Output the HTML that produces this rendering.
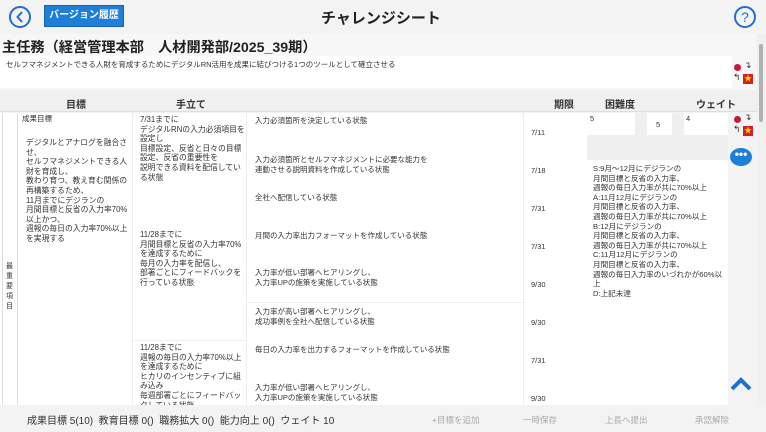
<!DOCTYPE html>
<html><head><meta charset="utf-8"><style>
*{margin:0;padding:0;box-sizing:border-box}
body{width:766px;height:432px;overflow:hidden;background:#f3f3f3;font-family:"Liberation Sans","Noto Sans CJK JP",sans-serif;color:#333;position:relative}
.a{position:absolute}
.t{font-size:7.5px;line-height:9.6px;white-space:nowrap}
.w{background:#fff}
</style></head><body>
<div class="a" style="left:9px;top:6px;width:22px;height:22px;border:2px solid #1f6fd0;border-radius:50%;"></div>
<svg class="a" style="left:9px;top:6px" width="22" height="22"><path d="M13 6 L8.5 11 L13 16" stroke="#1f6fd0" stroke-width="2" fill="none"/></svg>
<div class="a" style="left:44px;top:5px;width:80px;height:22px;background:#1f7fd8;border:1px solid #1565b0;color:#fff;font-size:10px;font-weight:bold;line-height:20px;text-align:center">バージョン履歴</div>
<div class="a" style="left:321px;top:7px;font-size:15px;font-weight:bold;color:#222">チャレンジシート</div>
<div class="a" style="left:734px;top:6px;width:22px;height:22px;border:2px solid #1f6fd0;border-radius:50%;color:#1f6fd0;font-size:14px;line-height:18px;text-align:center">?</div>
<div class="a" style="left:0;top:34px;width:757px;height:56px;background:#f7f7f7"></div>
<div class="a" style="left:2px;top:37px;font-size:14.2px;font-weight:bold;color:#222">主任務（経営管理本部　人材開発部/2025_39期）</div>
<div class="a w" style="left:0;top:56px;width:732px;height:32px"></div>
<div class="a" style="left:6px;top:59px;font-size:7.5px;white-space:nowrap">セルフマネジメントできる人財を育成するためにデジタルRN活用を成果に結びつける1つのツールとして確立させる</div>
<div class="a" style="left:734px;top:64px;width:7px;height:7px;border-radius:50%;background:#c8193c"></div>
<div class="a" style="left:744px;top:60px;font-size:9px">↴</div>
<div class="a" style="left:733px;top:72px;font-size:9px">↰</div>
<div class="a" style="left:743px;top:74px;width:10px;height:10px;background:#d42020;color:#ffd800;font-size:8px;line-height:10px;text-align:center">★</div>
<div class="a" style="left:0;top:90px;width:757px;height:22px;background:#f0f0f0;border-bottom:1px solid #ddd"></div>
<div class="a" style="left:66px;top:96px;font-size:10px;font-weight:bold">目標</div>
<div class="a" style="left:176px;top:96px;font-size:10px;font-weight:bold">手立て</div>
<div class="a" style="left:554px;top:96px;font-size:10px;font-weight:bold">期限</div>
<div class="a" style="left:605px;top:96px;font-size:10px;font-weight:bold">困難度</div>
<div class="a" style="left:696px;top:96px;font-size:10px;font-weight:bold">ウェイト</div>
<div class="a w" style="left:0;top:113px;width:728px;height:292px"></div>
<div class="a" style="left:2px;top:113px;width:16px;height:292px;border-left:1px solid #ddd;border-right:1px solid #ddd"></div>
<div class="a t" style="left:6px;top:262px;width:8px;white-space:normal;line-height:10px;font-size:7px">最重要項目</div>
<div class="a t" style="left:22px;top:114px">成果目標</div>
<div class="a t" style="left:26px;top:138px;font-size:7.8px;line-height:9.6px">デジタルとアナログを融合さ<br>せ、<br>セルフマネジメントできる人<br>財を育成し、<br>教わり育つ、教え育む関係の<br>再構築するため、<br>11月までにデジランの<br>月間目標と反省の入力率70%<br>以上かつ、<br>週報の毎日の入力率70%以上<br>を実現する</div>
<div class="a" style="left:132px;top:113px;width:1px;height:292px;background:#eee"></div>
<div class="a" style="left:246px;top:113px;width:1px;height:292px;background:#eee"></div>
<div class="a" style="left:523px;top:113px;width:1px;height:292px;background:#eee"></div>
<div class="a" style="left:133px;top:340px;width:113px;height:1px;background:#eee"></div>
<div class="a" style="left:247px;top:302px;width:276px;height:1px;background:#eee"></div>
<div class="a t" style="left:140px;top:115px;font-size:7.8px">7/31までに<br>デジタルRNの入力必須項目を<br>設定し<br>目標設定、反省と日々の目標<br>設定、反省の重要性を<br>説明できる資料を配信してい<br>る状態</div>
<div class="a t" style="left:140px;top:230px;font-size:7.8px">11/28までに<br>月間目標と反省の入力率70%<br>を達成するために<br>毎月の入力率を配信し、<br>部署ごとにフィードバックを<br>行っている状態</div>
<div class="a t" style="left:140px;top:343px;font-size:7.8px">11/28までに<br>週報の毎日の入力率70%以上<br>を達成するために<br>ヒカリのインセンティブに組<br>み込み<br>毎週部署ごとにフィードバッ<br>クしている状態</div>
<div class="a t" style="left:255px;top:116px">入力必須箇所を決定している状態</div>
<div class="a t" style="left:255px;top:155px">入力必須箇所とセルフマネジメントに必要な能力を<br>連動させる説明資料を作成している状態</div>
<div class="a t" style="left:255px;top:193px">全社へ配信している状態</div>
<div class="a t" style="left:255px;top:231px">月間の入力率出力フォーマットを作成している状態</div>
<div class="a t" style="left:255px;top:268px">入力率が低い部署へヒアリングし、<br>入力率UPの施策を実施している状態</div>
<div class="a t" style="left:255px;top:307px">入力率が高い部署へヒアリングし、<br>成功事例を全社へ配信している状態</div>
<div class="a t" style="left:255px;top:345px">毎日の入力率を出力するフォーマットを作成している状態</div>
<div class="a t" style="left:255px;top:383px">入力率が低い部署へヒアリングし、<br>入力率UPの施策を実施している状態</div>
<div class="a t" style="left:531px;top:128px">7/11</div>
<div class="a t" style="left:531px;top:166px">7/18</div>
<div class="a t" style="left:531px;top:204px">7/31</div>
<div class="a t" style="left:531px;top:242px">7/31</div>
<div class="a t" style="left:531px;top:280px">9/30</div>
<div class="a t" style="left:531px;top:318px">9/30</div>
<div class="a t" style="left:531px;top:356px">7/31</div>
<div class="a t" style="left:531px;top:394px">9/30</div>
<div class="a" style="left:587px;top:113px;width:141px;height:292px;background:#efefef"></div>
<div class="a w" style="left:587px;top:113px;width:48px;height:22px"></div>
<div class="a t" style="left:590px;top:114px">5</div>
<div class="a w" style="left:647px;top:113px;width:25px;height:22px"></div>
<div class="a t" style="left:656px;top:120px">5</div>
<div class="a w" style="left:684px;top:113px;width:44px;height:22px"></div>
<div class="a t" style="left:686px;top:114px">4</div>
<div class="a w" style="left:587px;top:160px;width:141px;height:245px"></div>
<div class="a t" style="left:593px;top:164px;font-size:7.6px">S:9月～12月にデジランの<br>月間目標と反省の入力率、<br>週報の毎日入力率が共に70%以上<br>A:11月12月にデジランの<br>月間目標と反省の入力率、<br>週報の毎日入力率が共に70%以上<br>B:12月にデジランの<br>月間目標と反省の入力率、<br>週報の毎日入力率が共に70%以上<br>C:11月12月にデジランの<br>月間目標と反省の入力率、<br>週報の毎日入力率のいづれかが60%以<br>上<br>D:上記未達</div>
<div class="a" style="left:734px;top:116px;width:7px;height:7px;border-radius:50%;background:#c8193c"></div>
<div class="a" style="left:744px;top:112px;font-size:9px">↴</div>
<div class="a" style="left:733px;top:124px;font-size:9px">↰</div>
<div class="a" style="left:743px;top:126px;width:10px;height:10px;background:#d42020;color:#ffd800;font-size:8px;line-height:10px;text-align:center">★</div>
<div class="a" style="left:730px;top:148px;width:22px;height:18px;border-radius:50%;background:#1f7fd8;color:#fff;font-size:12px;line-height:12px;text-align:center;font-weight:bold">•••</div>
<svg class="a" style="left:729px;top:376px" width="24" height="16"><path d="M3 13 L12 4 L21 13" stroke="#1f6fd0" stroke-width="4" fill="none"/></svg>
<div class="a" style="left:757px;top:34px;width:9px;height:372px;background:#f0f0f0"></div>
<div class="a" style="left:759px;top:44px;width:4px;height:78px;background:#b0b0b0;border-radius:2px"></div>
<div class="a" style="left:0;top:405px;width:766px;height:27px;background:#f3f3f3"></div>
<div class="a" style="left:27px;top:412px;font-size:10px;white-space:nowrap;color:#333">成果目標 5(10)&nbsp; 教育目標 0()&nbsp; 職務拡大 0()&nbsp; 能力向上 0()&nbsp; ウェイト 10</div>
<div class="a" style="left:432px;top:414px;font-size:8.5px;color:#aaa">+目標を追加</div>
<div class="a" style="left:523px;top:414px;font-size:8.5px;color:#aaa">一時保存</div>
<div class="a" style="left:605px;top:414px;font-size:8.5px;color:#aaa">上長へ提出</div>
<div class="a" style="left:695px;top:414px;font-size:8.5px;color:#aaa">承認解除</div>
</body></html>
